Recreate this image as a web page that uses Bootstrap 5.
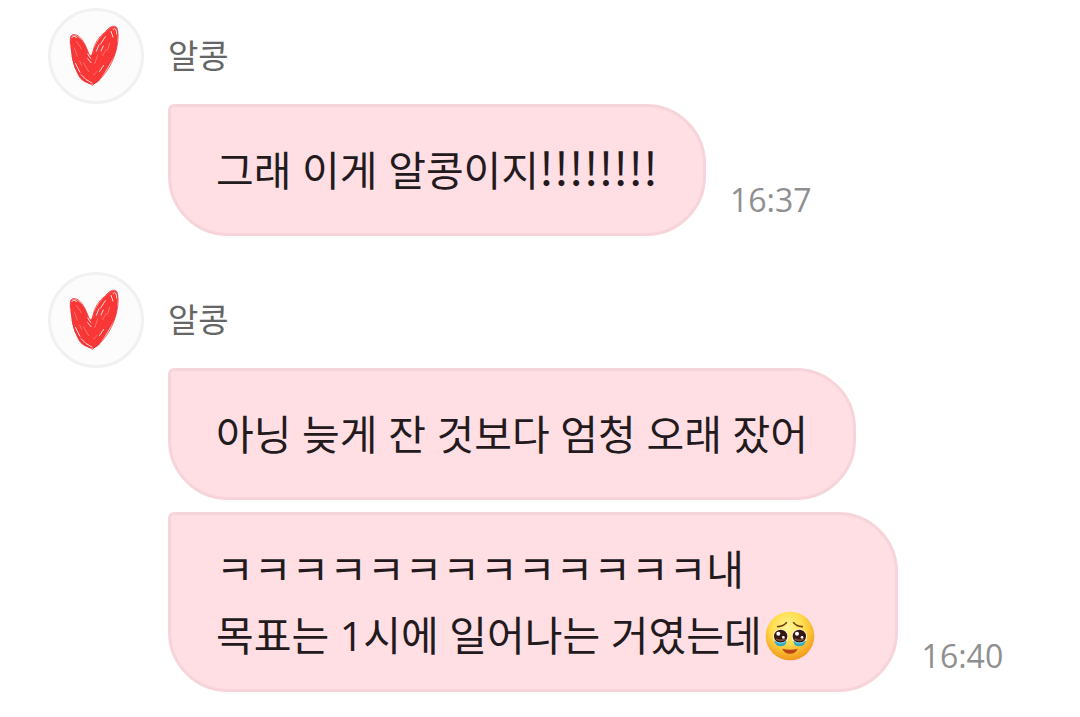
<!DOCTYPE html>
<html lang="ko">
<head>
<meta charset="utf-8">
<meta name="viewport" content="width=device-width, initial-scale=1">
<title>알콩</title>
<link rel="stylesheet" href="https://cdn.jsdelivr.net/npm/bootstrap@5.3.0/dist/css/bootstrap.min.css">
<style>
  body { background: #fff; font-family: "Open Sans", "Noto Sans CJK KR", sans-serif; }
  .chat { padding: 8px 0 24px 48px; }
  .chat-group { margin-bottom: 36px; }
  .sender { column-gap: 24px; height: 96px; }
  .avatar { width: 96px; height: 96px; border: 3px solid #f1f1f1; background: #fcfcfc; }
  .sender-name { font-size: 33px; line-height: 48px; color: #666; }
  .messages { margin-left: 120px; row-gap: 12px; }
  .message { column-gap: 24px; }
  .bubble {
    min-height: 132px; max-width: 80%; padding: 21px 45px;
    border: 3px solid #f7d3da; border-radius: 6px 60px 60px 60px;
    background: #ffdfe4; color: #231a1d;
    font-size: 41px; line-height: 66px; word-break: keep-all;
  }
  .shout { font-family: "Noto Sans CJK KR", sans-serif; font-size: 46px; line-height: 1; }
  .sent-at { font-size: 32px; line-height: 48px; padding-bottom: 12px; color: #8f8f8f; }
  .emoji { width: 50px; height: 50px; vertical-align: -10px; margin-left: 3px; }
</style>
</head>
<body>
<svg class="position-absolute" width="0" height="0" aria-hidden="true">
  <defs>
    <radialGradient id="face" cx="45%" cy="32%" r="68%">
      <stop offset="0" stop-color="#fff69a"/><stop offset=".5" stop-color="#ffdc4a"/><stop offset="1" stop-color="#f2981a"/>
    </radialGradient>
  </defs>
  <symbol id="heart" viewBox="3 3 240 240">
    <path d="M47 64Q54 57 67 64Q82 74 91 91L103 121Q111 125 118 97Q131 67 158 45Q173 32 184 37Q190 52 187 77Q187 110 171 136Q153 169 132 197Q116 214 99 205Q76 198 66 174Q52 147 49 112Q43 86 47 64Z" fill="#f93736"/>
    <g fill="none" stroke="#ef3638" stroke-width="2.5" stroke-linecap="round">
      <path d="M46 86Q43 53 61 59Q77 62 91 91L106 126M49 99Q53 159 79 185Q106 214 129 199Q158 171 174 134Q197 75 186 38Q174 25 153 49Q120 72 113 113"/>
      <path d="M51 123L60 158L85 193M154 47Q177 21 188 50L182 84L174 119L156 151M145 174L113 211L87 197"/>
    </g>
    <g fill="none" stroke="#ffdad6" stroke-width="3" stroke-linecap="round">
      <path d="M50 67Q56 60 65 67M174 43Q184 34 185 57M168 49L174 66M151 65L137 87M132 89L124 109M145 93L138 108M98 117L107 130M98 131L108 143M61 145L75 172M78 179Q90 195 111 204M146 151L133 170"/>
    </g>
    <g fill="none" stroke="#ff9089" stroke-width="2" stroke-linecap="round">
      <path d="M65 80L79 101M58 99L67 124M153 103L143 122M128 120L119 146M86 144L101 170M164 85L158 105M115 180L126 170M74 138L80 151"/>
    </g>
  </symbol>
  <symbol id="tearful" viewBox="50 35 150 150">
    <circle cx="125" cy="110" r="73" fill="url(#face)"/>
    <path d="M88 82Q106 80 114 70M136 70Q144 80 162 82" fill="none" stroke="#71440b" stroke-width="5" stroke-linecap="round"/>
    <circle cx="97" cy="112" r="23" fill="#fff5d8"/><circle cx="153" cy="112" r="23" fill="#fff5d8"/>
    <circle cx="97" cy="111" r="20" fill="#351713"/><circle cx="153" cy="111" r="20" fill="#351713"/>
    <path d="M84 119Q97 127 111 119M139 119Q153 127 166 119" fill="none" stroke="#865037" stroke-width="5"/>
    <g fill="#fff"><circle cx="90" cy="103" r="6"/><circle cx="146" cy="103" r="6"/><circle cx="105" cy="114" r="4"/><circle cx="161" cy="114" r="4"/></g>
    <path d="M77 124Q97 134 115 125Q114 141 97 141Q82 141 77 124ZM135 125Q153 134 173 124Q168 141 153 141Q136 141 135 125Z" fill="#38a9c5"/>
    <path d="M85 129Q97 134 109 129M141 129Q153 134 165 129" fill="none" stroke="#80d7dd" stroke-width="3"/>
    <path d="M102 148Q125 154 148 148Q142 163 125 163Q108 163 102 148Z" fill="#b7441b"/>
  </symbol>
</svg>

<main class="chat">
  <section class="chat-group">
    <header class="sender d-flex align-items-center">
      <div class="avatar rounded-circle d-flex align-items-center justify-content-center flex-shrink-0">
        <svg width="80" height="80" class="flex-shrink-0" role="img" aria-label="하트"><use href="#heart"/></svg>
      </div>
      <span class="sender-name">알콩</span>
    </header>
    <div class="messages d-flex flex-column">
      <div class="message d-flex align-items-end">
        <div class="bubble d-flex align-items-center"><p class="mb-0">그래 이게 알콩이지<span class="shout">!!!!!!!!</span></p></div>
        <time class="sent-at" datetime="16:37">16:37</time>
      </div>
    </div>
  </section>

  <section class="chat-group mb-0">
    <header class="sender d-flex align-items-center">
      <div class="avatar rounded-circle d-flex align-items-center justify-content-center flex-shrink-0">
        <svg width="80" height="80" class="flex-shrink-0" role="img" aria-label="하트"><use href="#heart"/></svg>
      </div>
      <span class="sender-name">알콩</span>
    </header>
    <div class="messages d-flex flex-column">
      <div class="message d-flex align-items-end">
        <div class="bubble d-flex align-items-center"><p class="mb-0">아닝 늦게 잔 것보다 엄청 오래 잤어</p></div>
      </div>
      <div class="message d-flex align-items-end">
        <div class="bubble d-flex align-items-center"><p class="mb-0">ㅋㅋㅋㅋㅋㅋㅋㅋㅋㅋㅋㅋㅋ내 목표는 1시에 일어나는 거였는데<svg class="emoji" role="img" aria-label="눈물을 참는 얼굴"><use href="#tearful"/></svg></p></div>
        <time class="sent-at" datetime="16:40">16:40</time>
      </div>
    </div>
  </section>
</main>
<script src="https://cdn.jsdelivr.net/npm/bootstrap@5.3.0/dist/js/bootstrap.bundle.min.js"></script>
</body>
</html>
